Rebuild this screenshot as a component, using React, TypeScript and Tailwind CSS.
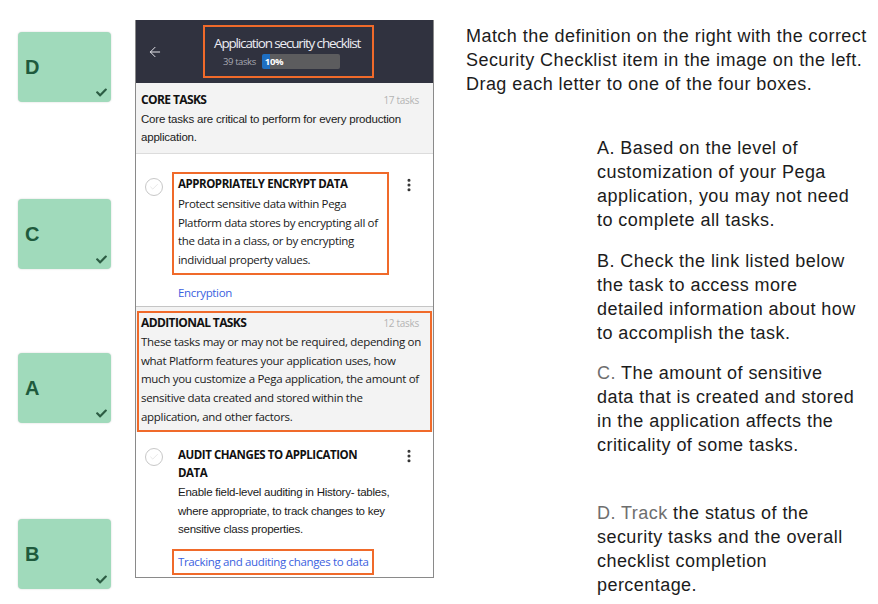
import { ArrowLeft, Check, EllipsisVertical } from "lucide-react"
import { FaCheck } from "react-icons/fa"

const answers = [
  { letter: "D", space: "mt-[32px]" },
  { letter: "C", space: "mt-[97px]" },
  { letter: "A", space: "mt-[84px]" },
  { letter: "B", space: "mt-[96px]" }
]

function AnswerBox({ letter, className }: { letter: string; className: string }) {
  return (
    <div
      className={`relative flex h-[70px] w-[93px] items-center rounded-[4px] bg-[#a0dabb] pl-[7px] shadow-[0_0_2px_rgba(0,0,0,0.18)] ${className}`}
    >
      <span className="font-['Liberation_Sans',Arial,sans-serif] text-[20px] font-bold text-[#1f5a3d]">
        {letter}
      </span>
      <FaCheck className="absolute bottom-[4px] right-[4px] h-[11px] w-[11px] text-[#2c5c43]" />
    </div>
  )
}

function TaskCircle({ className }: { className: string }) {
  return (
    <div
      className={`flex h-[18px] w-[18px] shrink-0 items-center justify-center rounded-full border border-[#c8c8c8] bg-white ${className}`}
    >
      <Check className="h-[10px] w-[10px] text-[#e2e2e2]" strokeWidth={2} />
    </div>
  )
}

function Kebab({ className }: { className: string }) {
  return (
    <EllipsisVertical
      className={`h-[16px] w-[16px] shrink-0 text-[#333] ${className}`}
      strokeWidth={2.6}
    />
  )
}

function PhoneScreen() {
  return (
    <div className="mt-[20px] w-[299px] self-start border-x border-b border-[#8a8a8a] font-['Open_Sans',sans-serif] text-[11.5px] leading-[18.7px] tracking-[-0.35px] text-[#1a1a1a]">
      <header className="flex h-[63px] items-center bg-[#30323f]">
        <ArrowLeft className="ml-[11px] h-[16px] w-[16px] text-[#e4e4ea]" strokeWidth={1.5} />
        <div className="ml-[40px] h-[53px] w-[171px] border-2 border-[#f06a2a] pl-[9px] pt-[7px]">
          <div className="whitespace-nowrap text-[13.5px] leading-[18px] tracking-[-1.15px] text-[#ececf2]">
            Application security checklist
          </div>
          <div className="ml-[9px] mt-[2px] flex items-center gap-[6px]">
            <span className="whitespace-nowrap text-[9.5px] leading-[15px] tracking-[-0.4px] text-[#a8a9b2]">
              39 tasks
            </span>
            <div className="flex h-[15px] w-[78px] items-center rounded-[2px] bg-[linear-gradient(to_right,#1e6fc2_8px,#5c5c5e_8px)] pl-[3px]">
              <span className="text-[9.5px] font-bold leading-[15px] tracking-[-0.4px] text-white">10%</span>
            </div>
          </div>
        </div>
      </header>

      <section className="border-b border-[#dcdcdc] bg-[#f3f3f3] px-[5px] pb-[6px] pt-[8px]">
        <div className="flex items-center justify-between pr-[9px]">
          <h2 className="text-[12px] font-bold tracking-[-0.6px] text-[#111]">CORE TASKS</h2>
          <span className="text-[10px] tracking-[-0.3px] text-[#b3b3b3]">17 tasks</span>
        </div>
        <p className="whitespace-nowrap font-['Liberation_Sans',Arial,sans-serif] text-[11.5px] tracking-[-0.2px]">
          Core tasks are critical to perform for every production
          <br />
          application.
        </p>
      </section>

      <div className="flex items-start border-b border-[#c5c5c5] pb-[4px] pl-[9px] pt-[18px]">
        <TaskCircle className="mt-[6px]" />
        <div className="ml-[9px] w-[217px]">
          <div className="border-2 border-[#f06a2a] pb-[3px] pl-[4px] pt-[1px]">
            <h3 className="mb-[1px] whitespace-nowrap text-[11.5px] font-bold tracking-[-0.45px] text-[#111]">
              APPROPRIATELY ENCRYPT DATA
            </h3>
            <p className="whitespace-nowrap">
              Protect sensitive data within Pega
              <br />
              Platform data stores by encrypting all of
              <br />
              the data in a class, or by encrypting
              <br />
              individual property values.
            </p>
          </div>
          <a className="mt-[9px] block pl-[6px] text-[#3b5fe0]">Encryption</a>
        </div>
        <Kebab className="ml-[12px] mt-[5px]" />
      </div>

      <section className="bg-[#f3f3f3] px-[1px] pt-[4px]">
        <div className="border-2 border-[#f06a2a] pb-[3px] pl-[2px] pr-[11px] pt-[1px]">
          <div className="flex items-center justify-between">
            <h2 className="text-[12px] font-bold tracking-[-0.6px] text-[#111]">ADDITIONAL TASKS</h2>
            <span className="text-[10px] tracking-[-0.3px] text-[#b3b3b3]">12 tasks</span>
          </div>
          <p className="whitespace-nowrap tracking-[-0.3px]">
            These tasks may or may not be required, depending on
            <br />
            what Platform features your application uses, how
            <br />
            much you customize a Pega application, the amount of
            <br />
            sensitive data created and stored within the
            <br />
            application, and other factors.
          </p>
        </div>
      </section>

      <div className="flex items-start pb-[2px] pl-[9px] pt-[14px]">
        <TaskCircle className="mt-[2px]" />
        <div className="ml-[9px] w-[217px]">
          <h3 className="whitespace-nowrap pl-[6px] text-[11.5px] font-bold tracking-[-0.45px] text-[#111]">
            AUDIT CHANGES TO APPLICATION
            <br />
            DATA
          </h3>
          <p className="whitespace-nowrap pl-[6px] font-['Liberation_Sans',Arial,sans-serif] text-[11.5px] tracking-[-0.25px]">
            Enable field-level auditing in History- tables,
            <br />
            where appropriate, to track changes to key
            <br />
            sensitive class properties.
          </p>
          <a className="mt-[9.5px] inline-block whitespace-nowrap border-2 border-[#f06a2a] px-[4px] py-[2px] text-[#3b5fe0]">
            Tracking and auditing changes to data
          </a>
        </div>
        <Kebab className="ml-[12px] mt-[2px]" />
      </div>
    </div>
  )
}

export default function App() {
  return (
    <div className="flex min-h-screen w-[878px] overflow-hidden bg-white text-[#1c1c1c]">
      <div className="flex w-[135px] shrink-0 flex-col pl-[18px]">
        {answers.map((item) => (
          <AnswerBox key={item.letter} letter={item.letter} className={item.space} />
        ))}
      </div>

      <PhoneScreen />

      <div className="ml-[32px] mt-[24px] whitespace-nowrap font-['Liberation_Sans',Arial,sans-serif] text-[18px] leading-[24px] tracking-[0.45px]">
        <p>
          Match the definition on the right with the correct
          <br />
          Security Checklist item in the image on the left.
          <br />
          Drag each letter to one of the four boxes.
        </p>
        <div className="ml-[131px] mt-[40px] flex flex-col">
          <p>
            A. Based on the level of
            <br />
            customization of your Pega
            <br />
            application, you may not need
            <br />
            to complete all tasks.
          </p>
          <p className="mt-[17px]">
            B. Check the link listed below
            <br />
            the task to access more
            <br />
            detailed information about how
            <br />
            to accomplish the task.
          </p>
          <p className="mt-[16px]">
            <span className="text-[#6e6e6e]">C.</span> The amount of sensitive
            <br />
            data that is created and stored
            <br />
            in the application affects the
            <br />
            criticality of some tasks.
          </p>
          <p className="mt-[44px]">
            <span className="text-[#6e6e6e]">D. Track </span>the status of the
            <br />
            security tasks and the overall
            <br />
            checklist completion
            <br />
            percentage.
          </p>
        </div>
      </div>
    </div>
  )
}
